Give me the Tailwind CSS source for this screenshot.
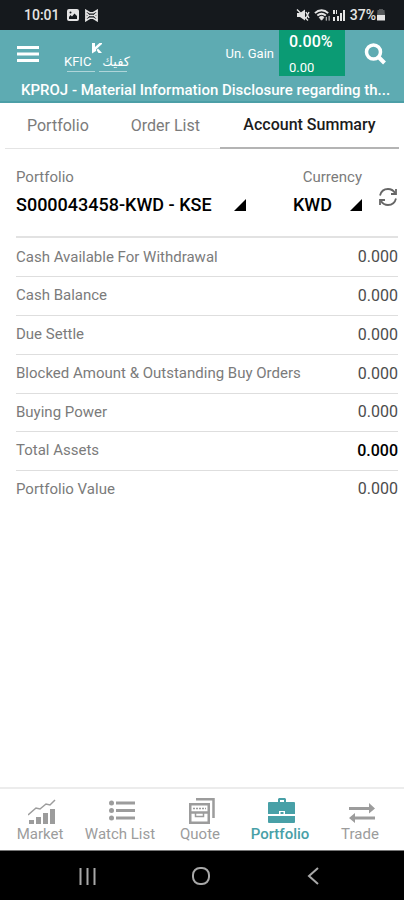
<!DOCTYPE html>
<html lang="en">

<head>
    <meta charset="UTF-8">
    <meta name="viewport" content="width=device-width, initial-scale=1.0">
    <title>Account Summary</title>
    <script src="https://cdn.jsdelivr.net/npm/@tailwindcss/browser@4"></script>
</head>

<body class="min-h-screen flex flex-col bg-white font-['Roboto',sans-serif] text-[#7b7b7b]">
    <!-- status bar -->
    <div class="h-[30px] pl-6 pr-[18px] flex items-center justify-between bg-[#15191d] text-[#e4e4e4] text-sm font-medium">
        <div class="flex items-center gap-1">
            <span class="mr-[2px]">10:01</span>
            <svg viewBox="0 0 14 14" class="w-[14px] h-[14px]" fill="currentColor">
                <path fill-rule="evenodd" d="M3 1h8a2 2 0 012 2v8a2 2 0 01-2 2H3a2 2 0 01-2-2V3a2 2 0 012-2zM3 11h8V8L8.500 5.500 6 8.500 4.500 7 3 9zM4.500 3.500a1 1 0 100 2 1 1 0 000-2z" />
            </svg>
            <svg viewBox="0 0 16 14" class="w-[15px] h-[13px]" fill="none" stroke="currentColor" stroke-width="1.800">
                <path d="M2 12.500V1.500l4 2.500h4l4-2.500v11L10 10H6zM2 4l3 3-3 3M14 4l-3 3 3 3M6 7h4" />
            </svg>
        </div>
        <div class="flex items-center">
            <svg viewBox="0 0 14 14" class="w-[14px] h-[14px] mr-1" fill="currentColor">
                <path d="M1 5h3l5-3.500v11L4 9H1z" />
                <path d="M10 4l3 6M13 4l-3 6M1 1.500l11 11" stroke="currentColor" stroke-width="1.400" />
            </svg>
            <svg viewBox="0 0 18 14" class="w-[17px] h-[14px] mr-[2px]" fill="none" stroke="currentColor" stroke-width="2">
                <path d="M1 5c4-4 10-4 14 0M3.500 7.500c3-2.500 6-2.500 9 0" />
                <path d="M5.500 9.500c2-1.500 3.500-1.500 5 0L8 12.500zM13 13V9M16 8v5" fill="currentColor" stroke-width="1" />
            </svg>
            <svg viewBox="0 0 12 14" class="w-[12px] h-[14px] mr-[5px]" fill="currentColor">
                <path d="M0 2h2v4H0zM3 2h1v4H3zM0 9h2v4H0zM4 8h2v5H4zM7 5h2v8H7zM10 2h2v11h-2z" />
            </svg>
            <span>37%</span>
            <svg viewBox="0 0 10 12" class="w-[10px] h-[12px]" fill="currentColor">
                <path d="M3 0h4v1h1.500L9 6H1l.5-5H3z" fill="#55585a" />
                <path d="M1 6h8v5.500H1z" />
            </svg>
        </div>
    </div>

    <!-- header -->
    <header class="bg-[#5eabb2] text-white border-b-2 border-[#4c9fa7]">
        <div class="flex items-start px-4">
            <button type="button" aria-label="Menu" class="mt-4">
                <svg viewBox="0 0 24 17" class="w-6 h-[17px]" fill="currentColor">
                    <path d="M1 0h22v3H1zM1 6.500h22v3H1zM1 13h22v3H1z" />
                </svg>
            </button>
            <div class="ml-6 mt-3 w-[66px]">
                <svg viewBox="0 0 12 12" class="mx-auto w-3 h-3" fill="currentColor">
                    <path d="M1 1h3v4L8.500 1h2.500v1L5 7.500V9L1 11.500z" />
                    <path d="M7 6.500l4 4.500H7.500L5.500 8z" />
                </svg>
                <div class="flex items-center justify-between leading-4 text-[13px]">
                    <span>KFIC</span>
                    <span class="font-['DejaVu_Sans',sans-serif]" lang="ar" dir="rtl">كفيك</span>
                </div>
                <div class="flex gap-1 px-[3px] pt-px">
                    <div class="h-px grow bg-white/50"></div>
                    <div class="h-px grow bg-white/50"></div>
                </div>
            </div>
            <span class="ml-auto mt-[14px] text-[13px] leading-5">Un. Gain</span>
            <div class="ml-[5px] w-[66px] h-[46px] pl-[10px] bg-[#0b9b74]">
                <div class="text-base leading-6 font-medium">0.00%</div>
                <div class="mt-[6px] text-[13px] leading-4">0.00</div>
            </div>
            <button type="button" aria-label="Search" class="ml-[19px] mt-3">
                <svg viewBox="0 0 24 24" class="w-6 h-6" fill="none" stroke="currentColor" stroke-width="3.500">
                    <circle cx="9.500" cy="10" r="7" />
                    <path d="M14.500 15l6 6" stroke-width="4" />
                </svg>
            </button>
        </div>
        <p class="pl-[21px] pr-2 pt-1 pb-px text-[15px] leading-5 font-medium truncate">KPROJ - Material Information Disclosure regarding th...</p>
    </header>

    <!-- tabs -->
    <nav class="mx-[5px] h-[46px] flex text-base">
        <a href="#" class="px-[22px] flex items-center border-b border-[#e4e4e4]">Portfolio</a>
        <a href="#" class="px-5 flex items-center border-b border-[#e4e4e4]">Order List</a>
        <a href="#" aria-current="page" class="grow flex items-center justify-center border-b-2 border-[#b4b4b4] font-medium text-[#1c1c1c]">Account Summary</a>
    </nav>

    <main class="grow pl-4 pr-[6px] text-[15px]">
        <div class="h-[89px] pt-[18px] flex border-b-2 border-[#e2e2e2]">
            <div>
                <label for="portfolio" class="block leading-5">Portfolio</label>
                <div class="relative mt-1">
                    <select id="portfolio" class="appearance-none pr-[34px] text-lg leading-7 font-medium text-black">
                        <option>S000043458-KWD - KSE</option>
                    </select>
                    <svg viewBox="0 0 12 12" class="absolute right-0 top-2 w-3 h-3 pointer-events-none" fill="#000">
                        <path d="M12 0v12H0z" />
                    </svg>
                </div>
            </div>
            <div class="ml-auto">
                <label for="currency" class="block text-right leading-5">Currency</label>
                <div class="relative mt-1">
                    <select id="currency" class="appearance-none pr-[30px] text-lg leading-7 font-medium text-black">
                        <option>KWD</option>
                    </select>
                    <svg viewBox="0 0 12 12" class="absolute right-0 top-2 w-3 h-3 pointer-events-none" fill="#000">
                        <path d="M12 0v12H0z" />
                    </svg>
                </div>
            </div>
            <button type="button" aria-label="Refresh" class="ml-4 mt-5 h-5">
                <svg viewBox="0 0 20 20" class="w-5 h-5" fill="none" stroke="#666" stroke-width="1.800">
                    <path d="M2 8.500C3 4.500 6 2 10 2c3 0 5.500 1.500 7 4M18 11.500c-1 4-4 6.500-8 6.500-3 0-5.500-1.500-7-4" />
                    <path d="M18 2v5h-5M2 18v-5h5" />
                </svg>
            </button>
        </div>

        <table class="w-full">
            <tbody>
                <tr class="h-[38px] border-b border-[#dedede]">
                    <th scope="row" class="text-left font-normal">Cash Available For Withdrawal</th>
                    <td class="text-right text-base text-[#4c4c4c]">0.000</td>
                </tr>
                <tr class="h-[39px] border-b border-[#dedede]">
                    <th scope="row" class="text-left font-normal">Cash Balance</th>
                    <td class="text-right text-base text-[#4c4c4c]">0.000</td>
                </tr>
                <tr class="h-[39px] border-b border-[#dedede]">
                    <th scope="row" class="text-left font-normal">Due Settle</th>
                    <td class="text-right text-base text-[#4c4c4c]">0.000</td>
                </tr>
                <tr class="h-[39px] border-b border-[#dedede]">
                    <th scope="row" class="text-left font-normal">Blocked Amount &amp; Outstanding Buy Orders</th>
                    <td class="text-right text-base text-[#4c4c4c]">0.000</td>
                </tr>
                <tr class="h-[38px] border-b border-[#dedede]">
                    <th scope="row" class="text-left font-normal">Buying Power</th>
                    <td class="text-right text-base text-[#4c4c4c]">0.000</td>
                </tr>
                <tr class="h-[39px] border-b border-[#dedede]">
                    <th scope="row" class="text-left font-normal">Total Assets</th>
                    <td class="text-right text-base font-medium text-black">0.000</td>
                </tr>
                <tr class="h-[38px]">
                    <th scope="row" class="text-left font-normal">Portfolio Value</th>
                    <td class="text-right text-base text-[#4c4c4c]">0.000</td>
                </tr>
            </tbody>
        </table>
    </main>

    <!-- bottom menu -->
    <nav class="h-[63px] pt-[9px] pr-1 grid grid-cols-5 border-t-2 border-[#ececec] text-[#9c9c9c] text-[15px] leading-5">
        <a href="#" class="flex flex-col items-center">
            <svg viewBox="0 0 28 26" class="w-7 h-[26px] ml-1" fill="currentColor">
                <path d="M1 22h5v4H1zM8 19h5v7H8zM15 15h5v11h-5zM22 11h5v15h-5z" />
                <path d="M0 17l8-7 4 1 6-5 4 1 5-5" fill="none" stroke="currentColor" stroke-width="1.500" />
            </svg>
            Market
        </a>
        <a href="#" class="flex flex-col items-center whitespace-nowrap">
            <svg viewBox="0 0 28 26" class="w-7 h-[26px] ml-1" fill="currentColor">
                <circle cx="3.500" cy="5" r="2.500" />
                <circle cx="3.500" cy="12.500" r="2.500" />
                <circle cx="3.500" cy="20" r="2.500" />
                <path d="M8 3.500h19v3H8zM8 11h19v3H8zM8 18.500h19v3H8z" />
            </svg>
            Watch List
        </a>
        <a href="#" class="flex flex-col items-center">
            <svg viewBox="0 0 28 26" class="w-7 h-[26px] ml-1" fill="none" stroke="currentColor" stroke-width="2.500">
                <path d="M8 1.250h17.500V20" />
                <path d="M2.250 6.250h18.500v18.500H2.250z" />
                <path d="M3 14.500h17" />
                <path d="M5 10.500h13" stroke-width="1.500" stroke-dasharray="2 1" />
                <path d="M7.500 15v3.500h8V15" stroke-width="1.500" />
            </svg>
            Quote
        </a>
        <a href="#" aria-current="page" class="flex flex-col items-center text-[#48a0a7] font-medium">
            <svg viewBox="0 0 28 26" class="w-7 h-[26px] ml-1" fill="currentColor">
                <path fill-rule="evenodd" d="M10 4V1l1-1h6l1 1v3h8a1 1 0 011 1v11H17v-3h-6v3H0V5a1 1 0 011-1zm2 0h4V2h-4z" />
                <path d="M12.500 14h3v2h-3zM0 18h27v6a1 1 0 01-1 1H1a1 1 0 01-1-1z" />
            </svg>
            Portfolio
        </a>
        <a href="#" class="flex flex-col items-center">
            <svg viewBox="0 0 28 26" class="w-7 h-[26px] ml-1" fill="currentColor">
                <path d="M1 9h20V5l6 5.500-6 5V12H1z" />
                <path d="M27 18.500H7V15l-6 5 6 5v-3.500h20z" />
            </svg>
            Trade
        </a>
    </nav>

    <!-- android buttons -->
    <div class="h-[50px] flex items-center bg-black border-t border-[#777] text-[#a8a8a8]">
        <div class="w-full pl-[77px] pr-20 flex items-center justify-between">
            <button type="button" aria-label="Recent apps">
                <svg viewBox="0 0 20 20" class="w-5 h-5" fill="none" stroke="currentColor" stroke-width="2">
                    <path d="M3.500 2v17M10.500 2v17M17.500 2v17" />
                </svg>
            </button>
            <button type="button" aria-label="Home">
                <svg viewBox="0 0 20 20" class="w-5 h-5" fill="none" stroke="currentColor" stroke-width="2">
                    <rect x="2" y="2" width="16" height="16" rx="7" />
                </svg>
            </button>
            <button type="button" aria-label="Back">
                <svg viewBox="0 0 20 20" class="w-5 h-5" fill="none" stroke="currentColor" stroke-width="2">
                    <path d="M14 2L5 10l9 8" />
                </svg>
            </button>
        </div>
    </div>
</body>

</html>
